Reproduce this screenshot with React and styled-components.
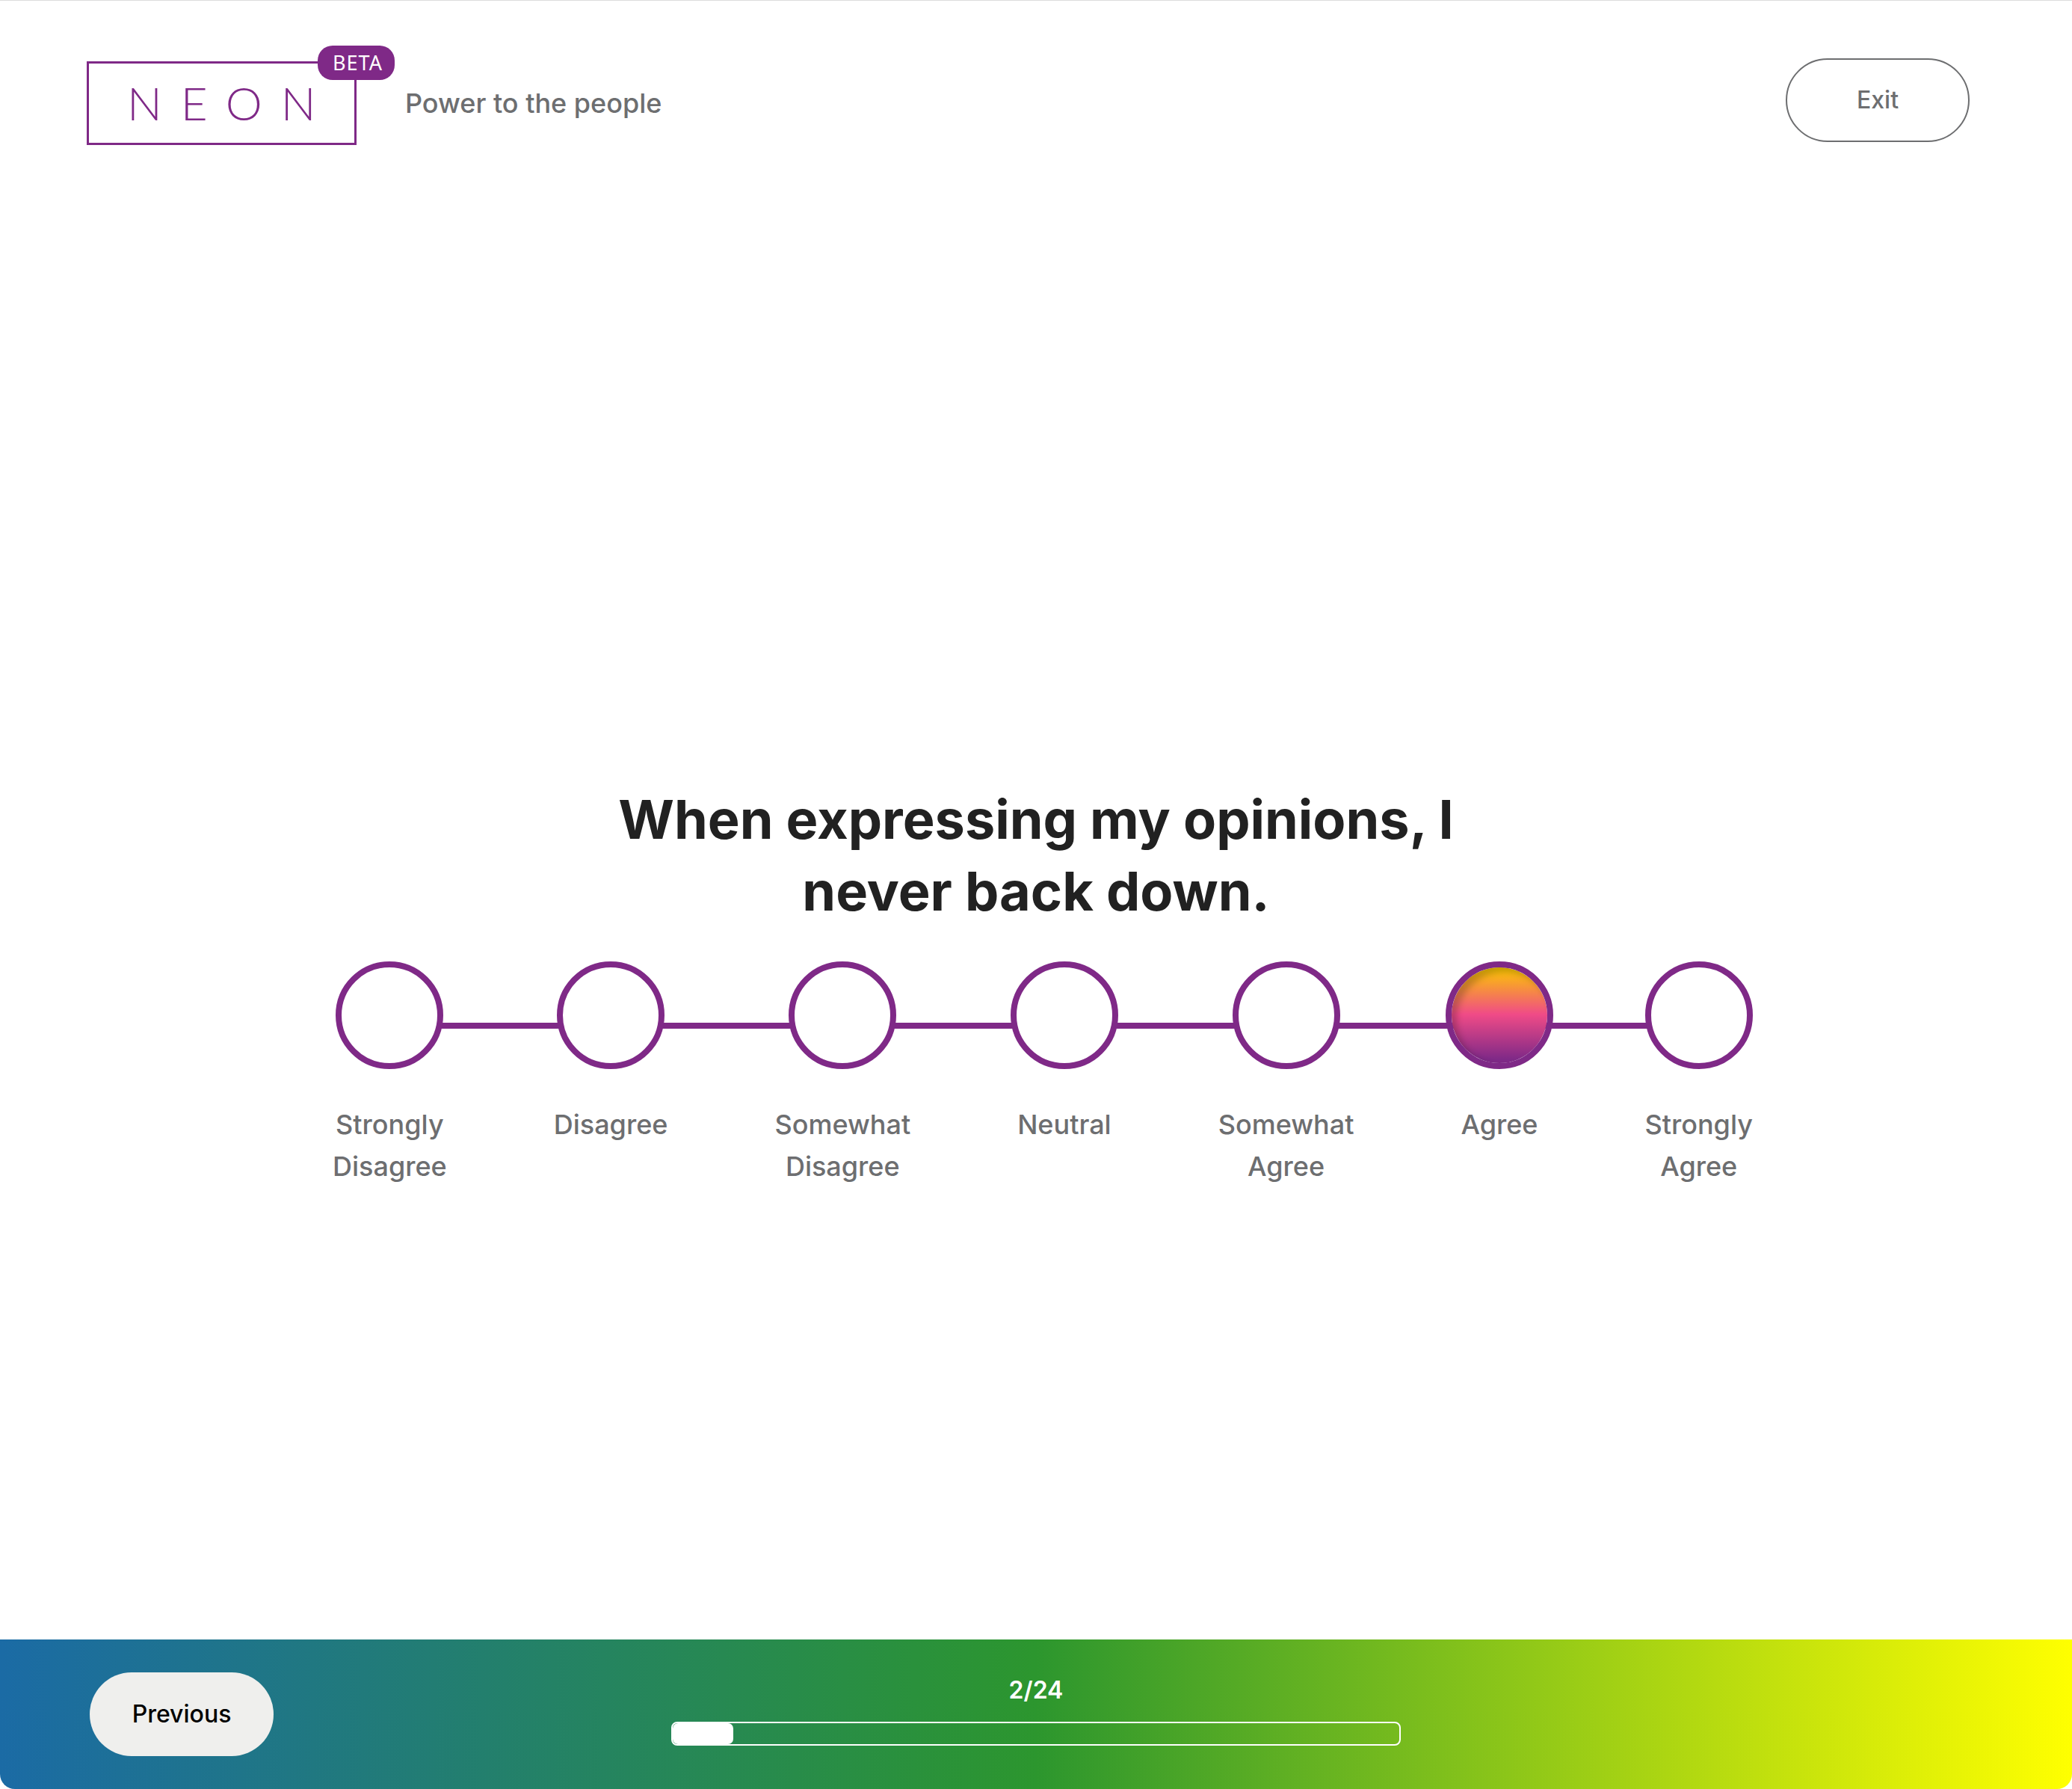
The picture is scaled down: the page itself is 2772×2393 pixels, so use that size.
import React, { useState } from "react";
import styled, { createGlobalStyle } from "styled-components";

const purple = "#7f2987";
const gray = "#6d6e70";

const GlobalStyle = createGlobalStyle`
  *, *::before, *::after { box-sizing: border-box; }
  body {
    margin: 0;
    background: #fff;
    font-family: Inter, "Liberation Sans", sans-serif;
  }
`;

const Page = styled.div`
  display: flex;
  flex-direction: column;
  min-height: 100vh;
  border-top: 1px solid #dcdcdc;
`;

const Header = styled.header`
  display: flex;
  justify-content: space-between;
  align-items: flex-start;
  padding: 77px 137px 77px 116px;
`;

const Brand = styled.div`
  display: flex;
  align-items: center;
  gap: 65px;
  padding-top: 4px;
`;

const Logo = styled.a`
  position: relative;
  display: flex;
  align-items: center;
  width: 361px;
  height: 112px;
  padding: 0 0 2px 51px;
  border: 3px solid ${purple};
  color: ${purple};
  font-family: Lato, sans-serif;
  font-size: 62px;
  font-weight: 300;
  letter-spacing: 25px;
  line-height: 64px;
  text-decoration: none;
`;

const Badge = styled.span`
  position: absolute;
  top: -24px;
  right: -54px;
  padding: 0 14px 0 18px;
  width: 103px;
  border-radius: 20px;
  background: ${purple};
  color: #fff;
  font-family: "Noto Sans", sans-serif;
  font-size: 27px;
  font-weight: 400;
  letter-spacing: 1px;
  line-height: 46px;
  text-align: center;
`;

const Tagline = styled.p`
  margin: 0;
  color: ${gray};
  font-size: 36px;
  font-weight: 500;
  line-height: 56px;
`;

const PillButton = styled.button`
  width: 246px;
  height: 112px;
  padding: 0;
  border: ${(p) => (p.$outlined ? `2px solid ${gray}` : "0")};
  border-radius: 56px;
  background: ${(p) => (p.$outlined ? "transparent" : "#efefed")};
  color: ${(p) => (p.$outlined ? gray : "#000")};
  font-family: inherit;
  font-size: 32px;
  font-weight: 500;
  line-height: 40px;
  cursor: pointer;
`;

const Main = styled.main`
  flex: 1;
  display: flex;
  flex-direction: column;
  align-items: center;
  justify-content: center;
  padding: 172px 48px 0;
`;

const Question = styled.h1`
  max-width: 1200px;
  margin: 0 0 46px;
  color: #212121;
  font-size: 72px;
  font-weight: 700;
  line-height: 96px;
  text-align: center;
`;

const Scale = styled.fieldset`
  position: relative;
  isolation: isolate;
  display: flex;
  justify-content: space-between;
  width: 100%;
  max-width: 1918px;
  margin: 0;
  padding: 0 0 0 18px;
  border: 0;

  &::before {
    content: "";
    position: absolute;
    z-index: -1;
    top: 82px;
    left: 94px;
    right: 72px;
    height: 8px;
    background: ${purple};
  }
`;

const Option = styled.label`
  display: flex;
  flex-direction: column;
  align-items: center;
  gap: 46px;
  width: min-content;
  color: ${gray};
  font-size: 36px;
  font-weight: 500;
  line-height: 56px;
  text-align: center;
  cursor: pointer;
`;

const Radio = styled.input`
  appearance: none;
  flex: none;
  width: 144px;
  height: 144px;
  margin: 0 -24px;
  border: 8px solid ${purple};
  border-radius: 50%;
  background: #fff;
  cursor: pointer;

  &:checked {
    background: linear-gradient(#fcc900 0%, #f04b87 49%, ${purple} 96%) padding-box;
    box-shadow: inset 7px 6px 8px rgba(0, 0, 0, 0.22);
  }
`;

const Footer = styled.footer`
  display: grid;
  grid-template-columns: 1fr minmax(0, 976px) 1fr;
  align-items: center;
  height: 200px;
  padding: 0 120px;
  border-radius: 0 0 20px 20px;
  background: linear-gradient(90deg, #1b6ba5 0%, #2c962e 50%, #ffff00 100%);
`;

const Progress = styled.div`
  display: flex;
  flex-direction: column;
  gap: 22px;
  padding-bottom: 10px;
`;

const Count = styled.span`
  color: #fff;
  font-size: 32px;
  font-weight: 600;
  line-height: 40px;
  text-align: center;
`;

const Track = styled.div`
  height: 32px;
  border: 2px solid #fff;
  border-radius: 8px;
`;

const Fill = styled.div`
  height: 100%;
  border-radius: 7px;
  background: #fff;
`;

const options = [
  "Strongly Disagree",
  "Disagree",
  "Somewhat Disagree",
  "Neutral",
  "Somewhat Agree",
  "Agree",
  "Strongly Agree",
];

const current = 2;
const total = 24;

export default function App() {
  const [answer, setAnswer] = useState("Agree");

  return (
    <>
      <GlobalStyle />
      <Page>
        <Header>
          <Brand>
            <Logo href="#">
              NEON
              <Badge>BETA</Badge>
            </Logo>
            <Tagline>Power to the people</Tagline>
          </Brand>
          <PillButton type="button" $outlined>
            Exit
          </PillButton>
        </Header>

        <Main>
          <Question id="question">When expressing my opinions, I never back down.</Question>
          <Scale aria-labelledby="question">
            {options.map((option) => (
              <Option key={option}>
                <Radio
                  type="radio"
                  name="answer"
                  value={option}
                  checked={answer === option}
                  onChange={() => setAnswer(option)}
                />
                <span>{option}</span>
              </Option>
            ))}
          </Scale>
        </Main>

        <Footer>
          <PillButton type="button">Previous</PillButton>
          <Progress>
            <Count>
              {current}/{total}
            </Count>
            <Track
              role="progressbar"
              aria-label="Questions answered"
              aria-valuenow={current}
              aria-valuemin={0}
              aria-valuemax={total}
            >
              <Fill style={{ width: `${(current / total) * 100}%` }} />
            </Track>
          </Progress>
        </Footer>
      </Page>
    </>
  );
}
